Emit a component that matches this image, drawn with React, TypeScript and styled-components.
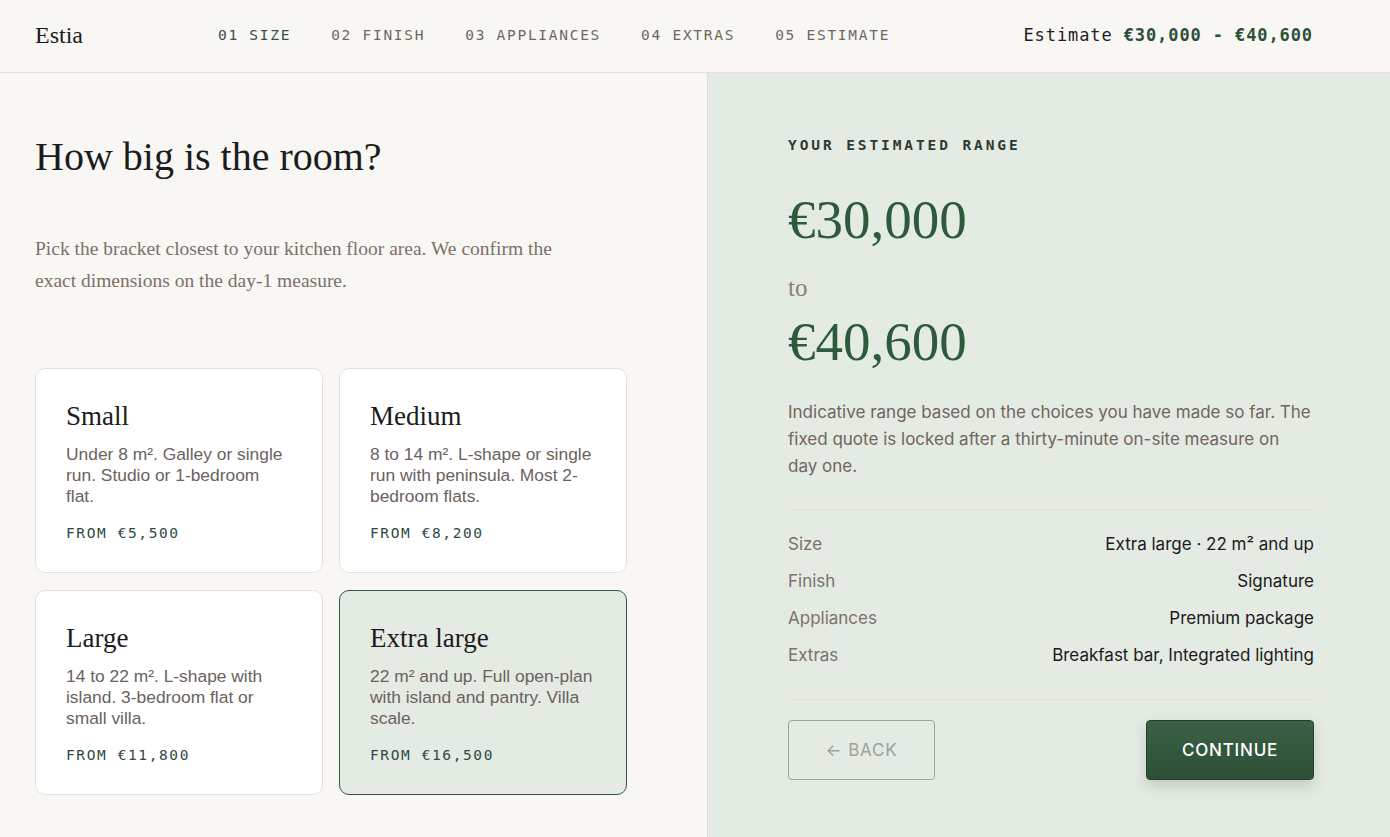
import React, { FC } from "react";
import styled, { createGlobalStyle } from "styled-components";

const serif = `"Liberation Serif", "DejaVu Serif", serif`;
const mono = `"DejaVu Sans Mono", "Liberation Mono", monospace`;
const sans = `"Inter", "Noto Sans", sans-serif`;

const GlobalStyle = createGlobalStyle`
  html, body {
    margin: 0;
    padding: 0;
    background: #f8f7f4;
  }
  * {
    box-sizing: border-box;
  }
`;

interface SizeOption {
  name: string;
  text: string;
  price: string;
  selected?: boolean;
}

const sizes: SizeOption[] = [
  {
    name: "Small",
    text: "Under 8 m². Galley or single run. Studio or 1-bedroom flat.",
    price: "From €5,500",
  },
  {
    name: "Medium",
    text: "8 to 14 m². L-shape or single run with peninsula. Most 2-bedroom flats.",
    price: "From €8,200",
  },
  {
    name: "Large",
    text: "14 to 22 m². L-shape with island. 3-bedroom flat or small villa.",
    price: "From €11,800",
  },
  {
    name: "Extra large",
    text: "22 m² and up. Full open-plan with island and pantry. Villa scale.",
    price: "From €16,500",
    selected: true,
  },
];

const steps = ["01 Size", "02 Finish", "03 Appliances", "04 Extras", "05 Estimate"];

const summary: [string, string][] = [
  ["Size", "Extra large · 22 m² and up"],
  ["Finish", "Signature"],
  ["Appliances", "Premium package"],
  ["Extras", "Breakfast bar, Integrated lighting"],
];

const App: FC = () => {
  return (
    <>
      <GlobalStyle />
      <Page>
        <Header>
          <Logo>Estia</Logo>
          <Steps>
            {steps.map((s, i) => (
              <Step key={s} $active={i === 0}>
                {s}
              </Step>
            ))}
          </Steps>
          <HeaderEstimate>
            Estimate <strong>€30,000 - €40,600</strong>
          </HeaderEstimate>
        </Header>
        <Main>
          <LeftPane>
            <Title>How big is the room?</Title>
            <Lead>
              Pick the bracket closest to your kitchen floor area. We confirm the
              exact dimensions on the day-1 measure.
            </Lead>
            <CardGrid>
              {sizes.map((s) => (
                <Card key={s.name} $selected={s.selected}>
                  <CardTitle>{s.name}</CardTitle>
                  <CardText>{s.text}</CardText>
                  <CardPrice>{s.price}</CardPrice>
                </Card>
              ))}
            </CardGrid>
          </LeftPane>
          <RightPane>
            <Eyebrow>Your estimated range</Eyebrow>
            <Amount>€30,000</Amount>
            <To>to</To>
            <Amount $second>€40,600</Amount>
            <Note>
              Indicative range based on the choices you have made so far. The
              fixed quote is locked after a thirty-minute on-site measure on day
              one.
            </Note>
            <Summary>
              {summary.map(([k, v]) => (
                <SummaryRow key={k}>
                  <dt>{k}</dt>
                  <dd>{v}</dd>
                </SummaryRow>
              ))}
            </Summary>
            <Actions>
              <BackButton>← Back</BackButton>
              <ContinueButton>Continue</ContinueButton>
            </Actions>
          </RightPane>
        </Main>
      </Page>
    </>
  );
};

export default App;

const Page = styled.div`
  min-height: 100vh;
  display: flex;
  flex-direction: column;
  background: #f8f7f4;
`;

const Header = styled.header`
  height: 73px;
  border-bottom: 1px solid #e3e0da;
  display: flex;
  align-items: center;
  padding: 0 77px 2px 35px;
`;

const Logo = styled.div`
  font-family: ${serif};
  font-size: 24px;
  color: #1c1c1c;
  width: 183px;
`;

const Steps = styled.nav`
  display: flex;
  gap: 40px;
  flex: 1;
`;

const Step = styled.span<{ $active?: boolean }>`
  font-family: ${mono};
  font-size: 14.5px;
  letter-spacing: 1.72px;
  text-transform: uppercase;
  color: ${(p) => (p.$active ? "#34504a" : "#6f675f")};
`;

const HeaderEstimate = styled.div`
  font-family: ${mono};
  font-size: 17px;
  letter-spacing: 0.9px;
  color: #1e1e1e;

  strong {
    color: #2d4f38;
    font-weight: 700;
  }
`;

const Main = styled.main`
  flex: 1;
  display: grid;
  grid-template-columns: 707px 1fr;
`;

const LeftPane = styled.section`
  padding: 60px 80px 40px 35px;
`;

const Title = styled.h1`
  margin: 0;
  font-family: ${serif};
  font-weight: 400;
  font-size: 40px;
  line-height: 48px;
  color: #1c1c1c;
`;

const Lead = styled.p`
  margin: 52px 0 0;
  max-width: 535px;
  font-family: ${serif};
  font-size: 19.5px;
  line-height: 32px;
  color: #7d7068;
`;

const CardGrid = styled.div`
  margin-top: 71px;
  display: grid;
  grid-template-columns: 288px 288px;
  gap: 17px 16px;
`;

const Card = styled.div<{ $selected?: boolean }>`
  padding: 30px 30px 29px;
  border-radius: 10px;
  border: 1px solid ${(p) => (p.$selected ? "#2d5a3c" : "#e6e1d9")};
  background: ${(p) => (p.$selected ? "#e4ebe3" : "#ffffff")};
`;

const CardTitle = styled.h3`
  margin: 0;
  font-family: ${serif};
  font-weight: 400;
  font-size: 27px;
  line-height: 34px;
  color: #1c1c1c;
`;

const CardText = styled.p`
  margin: 11px 0 0;
  font-family: "Liberation Sans", Arial, sans-serif;
  font-size: 17.4px;
  line-height: 21px;
  color: #6b625c;
`;

const CardPrice = styled.div`
  margin-top: 16px;
  font-family: ${mono};
  font-size: 14.5px;
  line-height: 20px;
  letter-spacing: 1.6px;
  text-transform: uppercase;
  color: #2e4a45;
`;

const RightPane = styled.aside`
  background: #e4ebe3;
  border-left: 1px solid #dcdcd4;
  padding: 62px 76px 40px 80px;
  display: flex;
  flex-direction: column;
`;

const Eyebrow = styled.div`
  font-family: ${mono};
  font-size: 14.5px;
  font-weight: 700;
  line-height: 20px;
  letter-spacing: 2.9px;
  text-transform: uppercase;
  color: #2f3a30;
`;

const Amount = styled.div<{ $second?: boolean }>`
  margin-top: ${(p) => (p.$second ? "7px" : "35px")};
  font-family: ${serif};
  font-size: 55px;
  line-height: 60px;
  color: #2d5a3c;
`;

const To = styled.div`
  margin-top: 21px;
  font-family: ${serif};
  font-size: 25px;
  line-height: 34px;
  color: #8a7f73;
`;

const Note = styled.p`
  margin: 27px 0 0;
  font-family: ${sans};
  font-size: 17px;
  line-height: 27px;
  color: #70665e;
  padding: 0 2px 29px 0;
  border-bottom: 1px solid #e6dcd8;
`;

const Summary = styled.dl`
  margin: 0;
  padding: 22px 0 31px;
  display: flex;
  flex-direction: column;
  gap: 12px;
  border-bottom: 1px solid #e6dcd8;
`;

const SummaryRow = styled.div`
  display: flex;
  justify-content: space-between;
  font-family: ${sans};
  font-size: 17px;
  line-height: 25px;

  dt {
    color: #7a726b;
  }
  dd {
    margin: 0;
    color: #1a1a1a;
    text-align: right;
  }
`;

const Actions = styled.div`
  margin-top: 20px;
  display: flex;
  justify-content: space-between;
`;

const buttonBase = `
  height: 60px;
  border-radius: 4px;
  font-family: ${sans};
  font-size: 17px;
  letter-spacing: 0.8px;
  text-transform: uppercase;
  cursor: pointer;
`;

const BackButton = styled.button`
  ${buttonBase}
  width: 147px;
  background: transparent;
  border: 1px solid #9ca39b;
  color: #9ca39b;
`;

const ContinueButton = styled.button`
  ${buttonBase}
  width: 168px;
  border: 1px solid #243f2c;
  background: linear-gradient(180deg, #3a6045 0%, #2b5035 100%);
  color: #ffffff;
  font-weight: 500;
  box-shadow: 0 6px 14px rgba(30, 60, 40, 0.18);
`;
